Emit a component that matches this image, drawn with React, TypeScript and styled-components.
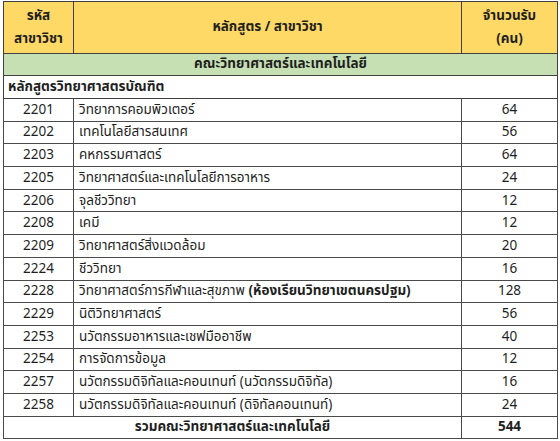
import React from "react";
import styled, {createGlobalStyle} from "styled-components";

const GlobalStyle = createGlobalStyle`
  html, body {
    margin: 0;
    padding: 0;
    background: #ffffff;
  }
  body {
    font-family: "Noto Sans Thai", "Noto Sans", "DejaVu Sans", sans-serif;
    color: #1f1f1f;
  }
`;

const Page = styled.div`
  padding: 1px 3px 0 3px;
`;

const Table = styled.table`
  width: 554px;
  border-collapse: collapse;
  table-layout: fixed;
  font-size: 13.5px;
  line-height: 1.2;
`;

const Head = styled.th`
  background: #ffd966;
  border: 1px solid #404040;
  height: 51px;
  padding: 0;
  font-weight: 700;
  line-height: 23px;
  text-align: center;
  vertical-align: middle;
`;

const Band = styled.td`
  background: #c6e0b4;
  border: 1px solid #404040;
  height: 21px;
  padding: 0;
  text-align: center;
  font-weight: 700;
`;

const Program = styled.td`
  border: 1px solid #404040;
  height: 22px;
  padding: 0 0 0 4px;
  font-weight: 700;
`;

const Cell = styled.td<{ center?: boolean; strong?: boolean }>`
  border: 1px solid #4a4a4a;
  height: 21.7px;
  padding: 0 0 0 ${(p) => (p.center ? 0 : 5)}px;
  text-align: ${(p) => (p.center ? "center" : "left")};
  font-weight: ${(p) => (p.strong ? 700 : 400)};
  white-space: nowrap;
`;

const Bold = styled.span`
  font-weight: 700;
`;

type Row = { code: string; name: string; extra?: string; seats: number };

const rows: Row[] = [
    {code: "2201", name: "วิทยาการคอมพิวเตอร์", seats: 64},
    {code: "2202", name: "เทคโนโลยีสารสนเทศ", seats: 56},
    {code: "2203", name: "คหกรรมศาสตร์", seats: 64},
    {code: "2205", name: "วิทยาศาสตร์และเทคโนโลยีการอาหาร", seats: 24},
    {code: "2206", name: "จุลชีววิทยา", seats: 12},
    {code: "2208", name: "เคมี", seats: 12},
    {code: "2209", name: "วิทยาศาสตร์สิ่งแวดล้อม", seats: 20},
    {code: "2224", name: "ชีววิทยา", seats: 16},
    {code: "2228", name: "วิทยาศาสตร์การกีฬาและสุขภาพ", extra: "(ห้องเรียนวิทยาเขตนครปฐม)", seats: 128},
    {code: "2229", name: "นิติวิทยาศาสตร์", seats: 56},
    {code: "2253", name: "นวัตกรรมอาหารและเชฟมืออาชีพ", seats: 40},
    {code: "2254", name: "การจัดการข้อมูล", seats: 12},
    {code: "2257", name: "นวัตกรรมดิจิทัลและคอนเทนท์ (นวัตกรรมดิจิทัล)", seats: 16},
    {code: "2258", name: "นวัตกรรมดิจิทัลและคอนเทนท์ (ดิจิทัลคอนเทนท์)", seats: 24},
];

export default function App() {
    const total = rows.reduce((sum, r) => sum + r.seats, 0);
    return (
        <Page>
            <GlobalStyle/>
            <Table>
                <colgroup>
                    <col style={{width: 70}}/>
                    <col style={{width: 388}}/>
                    <col style={{width: 96}}/>
                </colgroup>
                <thead>
                <tr>
                    <Head>รหัส<br/>สาขาวิชา</Head>
                    <Head>หลักสูตร / สาขาวิชา</Head>
                    <Head>จำนวนรับ<br/>(คน)</Head>
                </tr>
                </thead>
                <tbody>
                <tr>
                    <Band colSpan={3}>คณะวิทยาศาสตร์และเทคโนโลยี</Band>
                </tr>
                <tr>
                    <Program colSpan={3}>หลักสูตรวิทยาศาสตรบัณฑิต</Program>
                </tr>
                {rows.map((r) => (
                    <tr key={r.code}>
                        <Cell center>{r.code}</Cell>
                        <Cell>
                            {r.name}
                            {r.extra && <> <Bold>{r.extra}</Bold></>}
                        </Cell>
                        <Cell center>{r.seats}</Cell>
                    </tr>
                ))}
                <tr>
                    <Cell colSpan={2} center strong>รวมคณะวิทยาศาสตร์และเทคโนโลยี</Cell>
                    <Cell center strong>{total}</Cell>
                </tr>
                </tbody>
            </Table>
        </Page>
    );
}
